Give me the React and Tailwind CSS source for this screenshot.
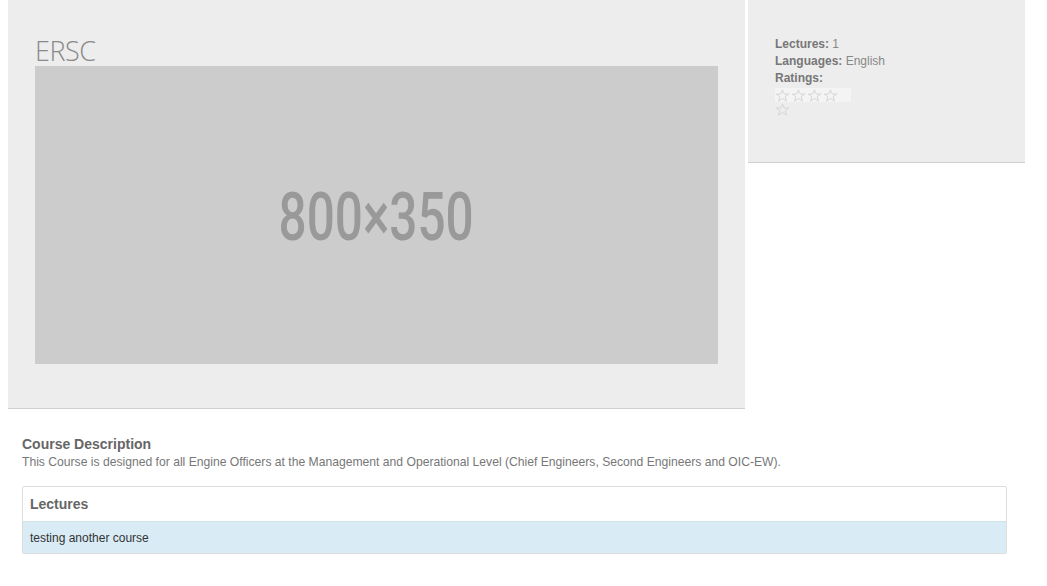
import React from "react";

function Star({ className = "" }) {
  return (
    <svg width="15" height="13" viewBox="0 0 24 22" className={className}>
      <path d="M12 1.5l3 7h7.5l-6 4.6 2.3 7.4L12 16l-6.8 4.5 2.3-7.4-6-4.6H9z" fill="none" stroke="#d4d4d4" strokeWidth="1.6" />
    </svg>
  );
}

export default function App() {
  return (
    <div className="w-[1047px] h-[586px] bg-white overflow-hidden" style={{ fontFamily: '"Liberation Sans", Arial, sans-serif' }}>
      <div className="flex items-start pl-[8px]">
        <div className="w-[737px] h-[409px] bg-[#ededed] border-b border-[#cfcfcf] pl-[27px] pt-[36px]">
          <div className="text-[27px] leading-[30px] text-[#8a8a8a] font-light tracking-[-0.5px]" style={{ fontFamily: '"Open Sans", sans-serif' }}>ERSC</div>
          <div className="w-[683px] h-[298px] bg-[#cccccc] flex items-center justify-center">
            <span className="text-[66px] leading-none text-[#999999] font-medium inline-block scale-x-[0.75] mt-[5px]" style={{ fontFamily: 'Roboto, sans-serif' }}>800×350</span>
          </div>
        </div>
        <div className="ml-[3px] w-[277px] h-[163px] bg-[#ededed] border-b border-[#cfcfcf] pl-[27px] pt-[36px] text-[12px] leading-[17px] text-[#888]">
          <div><b className="text-[#777]">Lectures:</b> 1</div>
          <div><b className="text-[#777]">Languages:</b> English</div>
          <div><b className="text-[#777]">Ratings:</b></div>
          <div className="w-[76px] h-[14px] bg-[#f4f4f4] flex items-center gap-[1px] mt-[1px]">
            <Star /><Star /><Star /><Star />
          </div>
          <div className="mt-[1px]"><Star /></div>
        </div>
      </div>
      <div className="px-[22px] pt-[26px] w-[1007px]">
        <div className="text-[14px] leading-[18px] font-bold text-[#666]">Course Description</div>
        <div className="text-[12.15px] leading-[17px] text-[#777] mt-[1px]">This Course is designed for all Engine Officers at the Management and Operational Level (Chief Engineers, Second Engineers and OIC-EW).</div>
        <div className="mt-[15px] w-[985px] border border-[#dddddd] rounded-[2px]">
          <div className="h-[35px] flex items-center px-[7px] text-[14px] font-bold text-[#666] border-b border-[#d3e2ea]">Lectures</div>
          <div className="h-[31px] flex items-center px-[7px] bg-[#d9ebf5] text-[12px] text-[#333]">testing another course</div>
        </div>
      </div>
    </div>
  );
}
